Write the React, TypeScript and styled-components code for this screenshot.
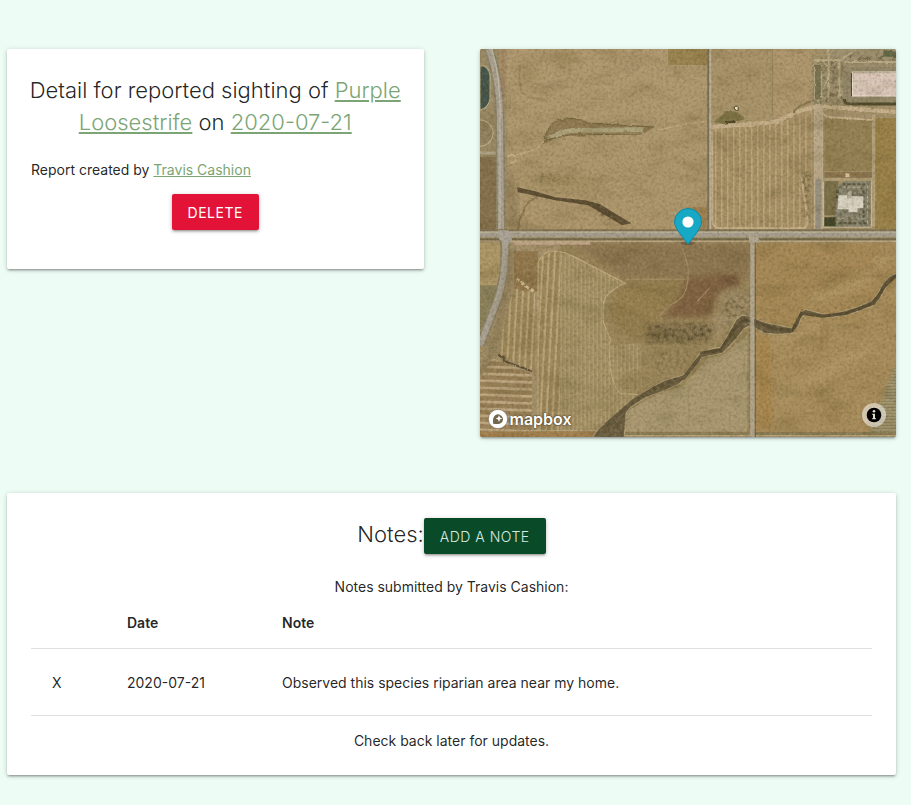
import React from 'react';
import styled, { createGlobalStyle, css } from 'styled-components';

const GlobalStyle = createGlobalStyle`
  *, *::before, *::after { box-sizing: border-box; }
  body {
    margin: 0;
    background: #edfdf6;
    color: rgba(0, 0, 0, 0.87);
    font-family: Inter, 'Open Sans', sans-serif;
    font-size: 14px;
    line-height: 21px;
  }
`;

const raised = css`
  box-shadow: 0 2px 2px 0 rgba(0, 0, 0, 0.14), 0 3px 1px -2px rgba(0, 0, 0, 0.12),
    0 1px 5px 0 rgba(0, 0, 0, 0.2);
`;

const Page = styled.main`
  display: grid;
  grid-template-columns: repeat(2, minmax(0, 1fr));
  gap: 56px;
  align-items: start;
  padding: 49px 15px 30px 7px;
`;

const Card = styled.section<{ $wide?: boolean }>`
  ${raised}
  background: #fff;
  border-radius: 2px;
  padding: ${(p) => (p.$wide ? '24px' : '25px 24px 39px')};
  grid-column: ${(p) => (p.$wide ? '1 / -1' : 'auto')};
`;

const Title = styled.h1`
  margin: 0 -8px 21px;
  font-size: 22px;
  font-weight: 300;
  line-height: 32px;
  text-align: center;
`;

const NotesHeader = styled.header`
  display: flex;
  justify-content: center;
  align-items: center;
  margin-bottom: 22px;
  padding-top: 1px;
`;

const NotesTitle = styled.h2`
  margin: 0;
  padding-bottom: 4px;
  font-size: 22px;
  font-weight: 300;
  line-height: 32px;
`;

const Link = styled.a`
  color: #7ba574;
  text-decoration: underline;
`;

const Text = styled.p<{ $center?: boolean }>`
  margin: 0;
  text-align: ${(p) => (p.$center ? 'center' : 'left')};
`;

const Actions = styled.div`
  display: flex;
  justify-content: center;
  margin-top: 14px;
`;

const Button = styled.button<{ $tone: 'danger' | 'primary' }>`
  ${raised}
  height: 36px;
  padding: 0 16px;
  border: 0;
  border-radius: 2px;
  background: ${(p) => (p.$tone === 'danger' ? '#e31337' : '#094a28')};
  color: ${(p) => (p.$tone === 'danger' ? '#fff' : '#dcebe2')};
  font: inherit;
  font-weight: ${(p) => (p.$tone === 'danger' ? 400 : 300)};
  letter-spacing: 0.5px;
  text-transform: uppercase;
  cursor: pointer;
`;

const MapFrame = styled.section`
  ${raised}
  position: relative;
  overflow: hidden;
  border-radius: 2px;
`;

const Terrain = styled.svg`
  display: block;
  width: 100%;
  height: auto;

  filter {
    color-interpolation-filters: sRGB;
  }
`;

const Marker = styled.svg`
  position: absolute;
  left: 50%;
  top: 50%;
  width: 28px;
  height: 38px;
  margin: -35px 0 0 -14px;
`;

const MapBrand = styled.a`
  position: absolute;
  left: 8px;
  bottom: 8px;
  display: flex;
  align-items: center;
  gap: 2px;
  color: #fff;
  font-size: 16px;
  font-weight: 600;
  line-height: 20px;
  text-decoration: none;
  text-shadow: 0 0 2px #4b412c, 0 0 2px #4b412c;
`;

const InfoButton = styled.button`
  position: absolute;
  right: 10px;
  bottom: 10px;
  display: grid;
  place-items: center;
  width: 24px;
  height: 24px;
  padding: 0;
  border: 0;
  border-radius: 12px;
  background: rgba(255, 255, 255, 0.5);
  cursor: pointer;
`;

const Table = styled.table`
  width: 100%;
  margin-bottom: 14px;
  border-collapse: collapse;
  table-layout: fixed;
`;

const Row = styled.tr`
  border-bottom: 1px solid rgba(0, 0, 0, 0.12);
`;

const HeadCell = styled.th<{ $width?: string }>`
  width: ${(p) => p.$width || 'auto'};
  padding: 15px 5px;
  font-weight: 600;
  text-align: left;
`;

const Cell = styled.td`
  padding: 15px 5px;
`;

const RemoveButton = styled.button`
  display: block;
  height: 36px;
  padding: 0 16px;
  border: 0;
  background: transparent;
  color: inherit;
  font: inherit;
  cursor: pointer;
`;

const RIVER =
  'M112 388L118 380 128 371 152 352 165 342 184 331 202 326 211 317 220 303 230 300 240 298 246 289 251 279 256 270 262 266 270 267 284 273 298 276 312 279 317 272 319 264 325 260 332 262 344 265 352 265 376 258 390 252 397 245 402 235 409 227 416 224 416 228 411 230 405 239 399 250 393 256 378 262 352 268 342 268 326 264 321 268 318 277 311 284 298 285 284 284 270 276 263 280 257 288 250 296 242 304 232 306 222 308 213 319 207 327 198 335 182 342 166 348 150 358 146 364 144 388Z';

const Satellite = () => (
  <Terrain viewBox="0 0 416 388" role="img" aria-label="Satellite view of the sighting location">
    <defs>
      <pattern id="rows" width="6" height="8" patternUnits="userSpaceOnUse">
        <rect width="6" height="8" fill="#a68f65" />
        <path d="M1.5 0V8" stroke="#bea880" strokeWidth="1.3" />
      </pattern>
      <pattern id="fineRows" width="4" height="8" patternUnits="userSpaceOnUse">
        <rect width="4" height="8" fill="#a08d62" />
        <path d="M1 0V8" stroke="#b3a077" strokeWidth="1" />
      </pattern>
      <pattern id="slantRows" width="6" height="8" patternUnits="userSpaceOnUse" patternTransform="rotate(3)">
        <rect width="6" height="8" fill="#9a855a" />
        <path d="M1.5 0V8" stroke="#bba678" strokeWidth="2" />
      </pattern>
      <pattern id="flatRows" width="8" height="7" patternUnits="userSpaceOnUse" patternTransform="rotate(2)">
        <rect width="8" height="7" fill="#987f57" />
        <path d="M0 2H8" stroke="#c0aa84" strokeWidth="2.6" />
      </pattern>
      <pattern id="hatch" width="3" height="3" patternUnits="userSpaceOnUse">
        <rect width="3" height="3" fill="#a3966e" />
        <path d="M0 1H3" stroke="#8a825f" strokeWidth="1" />
      </pattern>
      <linearGradient id="northField" x1="0" y1="0" x2="0" y2="1">
        <stop offset="0" stopColor="#b09971" />
        <stop offset="0.65" stopColor="#ac976e" />
        <stop offset="1" stopColor="#ad956c" />
      </linearGradient>
      <filter id="soft" x="-30%" y="-30%" width="160%" height="160%">
        <feGaussianBlur stdDeviation="5" />
      </filter>
      <filter id="blend" x="-10%" y="-10%" width="120%" height="120%">
        <feGaussianBlur stdDeviation="3" />
      </filter>
      <filter id="rough" x="-5%" y="-5%" width="110%" height="110%">
        <feTurbulence type="fractalNoise" baseFrequency="0.2" numOctaves="2" seed="4" result="n" />
        <feDisplacementMap in="SourceGraphic" in2="n" scale="3" xChannelSelector="R" yChannelSelector="G" />
      </filter>
      <filter id="grain" x="0" y="0" width="100%" height="100%">
        <feTurbulence type="fractalNoise" baseFrequency="0.35" numOctaves="4" seed="8" />
        <feColorMatrix values="0 0 0 0 0.25  0 0 0 0 0.2  0 0 0 0 0.1  1.6 0 0 0 -0.7" />
      </filter>
      <filter id="glint" x="0" y="0" width="100%" height="100%">
        <feTurbulence type="fractalNoise" baseFrequency="0.3" numOctaves="3" seed="31" />
        <feColorMatrix values="0 0 0 0 0.87  0 0 0 0 0.79  0 0 0 0 0.6  1.6 0 0 0 -0.7" />
      </filter>
      <filter id="mottle" x="0" y="0" width="100%" height="100%">
        <feTurbulence type="fractalNoise" baseFrequency="0.03 0.06" numOctaves="4" seed="21" />
        <feColorMatrix values="0 0 0 0 0.3  0 0 0 0 0.26  0 0 0 0 0.1  0 2 0 0 -0.95" />
      </filter>
      <filter id="scrub" x="-5%" y="-5%" width="110%" height="110%">
        <feTurbulence type="fractalNoise" baseFrequency="0.25" numOctaves="4" seed="12" />
        <feColorMatrix values="0 0 0 0 0.3  0 0 0 0 0.26  0 0 0 0 0.15  3 0 0 0 -1.3" result="t" />
        <feGaussianBlur in="SourceGraphic" stdDeviation="2" result="b" />
        <feComposite in="t" in2="b" operator="in" />
      </filter>
    </defs>

    <rect width="416" height="388" fill="#a3906a" />

    {/* fields north of the highway */}
    <rect x="27" width="201" height="182" fill="url(#northField)" />
    <rect width="19" height="181" fill="#9a8a66" />
    <rect y="108" width="16" height="73" fill="#86724f" />
    <rect x="188" width="40" height="16" fill="#99834f" />
    <path d="M40 16Q36 46 51 49L66 51" fill="none" stroke="#96825a" strokeWidth="2" opacity="0.7" filter="url(#rough)" />
    <g fill="#85703f" opacity="0.3" filter="url(#soft)">
      <ellipse cx="86" cy="7" rx="13" ry="8" />
      <ellipse cx="130" cy="5" rx="10" ry="7" />
      <ellipse cx="78" cy="132" rx="34" ry="7" />
      <ellipse cx="48" cy="24" rx="8" ry="14" />
      <ellipse cx="265" cy="24" rx="25" ry="10" />
    </g>
    <rect x="231" width="61" height="78" fill="#a8936a" />
    <rect x="293" width="39" height="69" fill="#ae966e" />
    <path d="M292 0V68" stroke="#958259" strokeWidth="1" />
    <path d="M231 80L272 77 300 73 331 64V181H231Z" fill="url(#rows)" />
    <path d="M232 83V172Q233 179 240 179H322Q328 178 327 169L321 128" fill="none" stroke="#c6b088" strokeWidth="2" />
    <rect x="344" y="69" width="48" height="53" fill="#948154" />
    <rect x="395" y="69" width="21" height="112" fill="#998049" />
    <rect x="344" y="123" width="48" height="6" fill="#8c7650" />
    <path d="M393 65V178M343 130H393" stroke="#b4a17b" strokeWidth="3" />
    <rect x="207" y="158" width="20" height="22" fill="#94713d" opacity="0.5" filter="url(#rough)" />

    {/* yards and service roads in the north-east */}
    <path d="M332 10H364V57H332Z" fill="#a09270" />
    <path d="M345 0H416V24H364L345 56Z" fill="#9e9070" />
    <path d="M332 10H364V57H332ZM366 4H416V14H366Z" filter="url(#scrub)" opacity="0.5" />
    <g fill="none" filter="url(#rough)">
      <rect x="334" y="15" width="7" height="36" fill="#7a7352" stroke="#b8ab88" strokeWidth="1" />
      <path d="M348 0V49M359 12V48M334 11H360L372 3" stroke="#b8aa84" strokeWidth="2" />
      <path d="M344 14Q353 22 345 35T348 51" stroke="#bfb28c" strokeWidth="1" />
      <path d="M364 13H416" stroke="#b9aa87" strokeWidth="2" />
      <path d="M403 4L416 6" stroke="#535c3d" strokeWidth="6" opacity="0.8" />
    </g>
    <path d="M370 18H416V56H366Q363 54 363 49V26Q363 20 370 18Z" fill="#928769" />
    <path d="M364 50Q364 55 369 55H416" fill="none" stroke="#504b2c" strokeWidth="3" />
    <rect x="372" y="24" width="44" height="23" fill="#dcc9bc" />
    <path d="M371 23H416M372 23V47H416" fill="none" stroke="#eee4d6" strokeWidth="1" />
    <path d="M371 24V47" stroke="#4c4637" strokeWidth="1" />
    <path d="M374 32H416" stroke="#c0b3a3" strokeDasharray="2 3" />
    <g fill="none" stroke="#c6b18c" filter="url(#rough)">
      <path d="M231 78L272 75 298 72 315 63 337 57 416 63" strokeWidth="4" />
      <path d="M337 60L347 68 394 71" strokeWidth="2" />
      <path d="M313 64Q319 54 334 52" strokeWidth="2" stroke="#84734c" />
    </g>
    <g filter="url(#rough)">
      <path d="M233 73L242 66 249 61 258 64 265 70 254 73 243 75Z" fill="#7c7246" />
      <path d="M244 73H255" stroke="#4c4727" strokeWidth="2" />
      <circle cx="256" cy="59" r="2" fill="#ede2c1" stroke="#574c30" />
    </g>
    <path d="M320 124L332 125 328 143 329 174H325L324 140Z" filter="url(#scrub)" />
    <path d="M338 56V182" stroke="#bba88a" strokeWidth="7" />
    <path d="M338 130V182" stroke="#979080" strokeWidth="6" />
    <path d="M334 60V180M342 60V180" stroke="#c3b292" strokeWidth="1" />
    <rect x="344" y="132" width="14" height="34" fill="#796f48" />
    <path d="M357 136L365 132H390V178H344V170L355 166Z" fill="#8b8772" />
    <g fill="none" strokeDasharray="3 2">
      <path d="M362 138H387M387 136V175M356 169H386" stroke="#b5ae96" strokeWidth="1" />
      <path d="M362 135H388M353 174H388M383 141V172" stroke="#55553f" strokeWidth="2" />
      <path d="M357 141V151" stroke="#4c5033" strokeWidth="3" />
    </g>
    <path d="M357 134H390V178H350V166Z" filter="url(#scrub)" opacity="0.5" />
    <path d="M358 146H367V149H368V147H383V159H377V163H368V160H357Z" fill="#dad4c5" />
    <path d="M368 142H371V149H367V145Z" fill="#b2ab98" />
    <path d="M343 131V178H391V131" fill="none" stroke="#cabc98" strokeWidth="1" />
    <rect x="344" y="168" width="11" height="9" fill="#424428" />
    <rect x="365" y="124" width="4" height="4" fill="#dfc6a2" />

    {/* gravel pit and creek */}
    <g filter="url(#rough)">
      <path d="M63 95Q66 78 76 72 94 66 108 74L174 78 164 84 90 86 76 89Z" fill="#907b53" />
      <path d="M67 90Q76 80 95 79L164 78 161 83 90 84 76 88Z" fill="#aca27b" />
      <path d="M63 95Q66 78 76 72 94 66 108 74L174 78M66 91L90 86 162 85" fill="none" stroke="#75653f" strokeWidth="1" />
      <path d="M178 81L206 75 228 72M31 107L54 101 64 93" fill="none" stroke="#c6b086" strokeWidth="1" />
      <path d="M57 148Q42 153 38 180" fill="none" stroke="#8e7a53" strokeWidth="2" />
      <path d="M27 106L36 107 36 112 29 115" fill="none" stroke="#d4bd91" strokeWidth="1" />
    </g>
    <path d="M28 112L37 139 38 180H26Z" fill="#84734f" opacity="0.6" filter="url(#blend)" />
    <path d="M37 138L55 142 75 148 105 151 120 155 136 165 151 174 142 176 127 167 108 156 75 151 53 146 38 143Z" fill="#5c4d33" />
    <path d="M112 156L128 164 140 175 122 166Z" filter="url(#scrub)" />
    <path d="M53 146H70V150H54ZM60 124H90V132H50Z" filter="url(#scrub)" opacity="0.5" />

    {/* west side: ponds and the county road */}
    <path d="M0 17H4Q10 20 10 28V50Q8 59 0 61Z" fill="#44544a" stroke="#bdb08a" strokeWidth="1" />
    <circle cx="0" cy="84" r="13" fill="#918360" stroke="#c6b68e" strokeWidth="1" />
    <path d="M0 104H18" stroke="#b0a588" strokeWidth="3" />
    <path d="M23 0V56" stroke="#a5805e" strokeWidth="3" opacity="0.8" />

    {/* fields south of the highway */}
    <rect y="194" width="24" height="42" fill="#ad9768" />
    <path d="M0 236H25L7 280 0 292Z" fill="#8a805b" />
    <rect x="34" y="202" width="24" height="40" fill="#91764c" />
    <path d="M80 194H270V382H110Z" fill="#9a865b" />
    <path d="M92 194H270V230H206L145 231Z" fill="#8c7551" filter="url(#blend)" />
    <path d="M148 231H205Q208 245 194 253L178 268 172 288 164 292 138 280 131 268 132 247Z" fill="#957e4f" filter="url(#blend)" />
    <path d="M206 228L254 224 262 234 240 246 232 268 180 269 196 253Z" fill="#7d6040" filter="url(#blend)" />
    <path d="M240 228L257 226V238L246 236Z" fill="#694e33" opacity="0.8" filter="url(#blend)" />
    <path d="M200 195Q212 219 206 239Q204 249 190 256L176 269M145 230H205M217 252L230 238" fill="none" stroke="#a98f66" strokeWidth="1" />
    <path d="M240 244L255 238 268 242V266L250 274 238 290 228 284Z" fill="#a4906b" filter="url(#blend)" />
    <path d="M244 246H268V264L252 270 242 282Z" filter="url(#scrub)" opacity="0.5" />
    <path d="M166 274H222L236 276 228 292 167 293Z" fill="#7c6a48" opacity="0.7" filter="url(#blend)" />
    <path d="M164 274H236L226 294H167Z" filter="url(#scrub)" opacity="0.7" />
    <path d="M170 300H218L200 318 176 326Z" filter="url(#scrub)" opacity="0.3" />
    <path d="M58 211Q65 202 75 202L86 203 145 233 126 246 123 269 130 296 160 294 162 336 144 362 114 382H58Z" fill="url(#fineRows)" />
    <path d="M58 211Q65 202 80 202V382H58Z" fill="url(#slantRows)" />
    <path d="M130 262Q136 290 162 294L166 270ZM142 324H162V342H142Z" fill="#8d7a4d" opacity="0.6" filter="url(#blend)" />
    <path d="M58 382V213Q64 200 76 202L87 204 145 234Q123 244 123 256V272L130 290Q127 330 140 344L158 345" fill="none" stroke="#c0ab80" strokeWidth="1" />
    <path d="M34 239L55 244V323L18 306 25 269Z" fill="url(#slantRows)" />
    <path d="M12 309L52 324V382H0V329Z" fill="url(#flatRows)" />
    <path d="M18 305L28 313 39 317 52 322" fill="none" stroke="#5e4f33" strokeWidth="2" filter="url(#rough)" />
    <path d="M52 322L80 334 123 343 149 349" fill="none" stroke="#7d6c45" strokeWidth="3" opacity="0.5" filter="url(#blend)" />
    <path d="M36 230L42 233 47 238 54 242" fill="none" stroke="#cbb78b" strokeWidth="3" strokeDasharray="4 2" filter="url(#rough)" />
    <path d="M144 382L148 361 182 342 202 337 228 309 246 304 267 285V382Z" fill="#a89770" />
    <path d="M208 337V382" stroke="#a08e66" strokeWidth="1" />
    <rect x="276" y="194" width="140" height="188" fill="#a58855" />
    <path d="M276 283L311 284 326 265 345 269 393 257 416 230V382H276Z" fill="#a88d5c" />
    <path d="M276 286L290 288 292 380H276Z" fill="#a78348" opacity="0.7" filter="url(#blend)" />
    <g stroke="#c3ab7e" fill="none" opacity="0.45" filter="url(#soft)">
      <path d="M416 195L380 235 325 253" strokeWidth="8" />
      <path d="M300 350L390 296" strokeWidth="7" />
      <path d="M290 296L314 284 344 270" strokeWidth="7" />
    </g>
    <path d="M324 236L328 252M342 270L346 287 334 308" fill="none" stroke="#8c744a" strokeWidth="4" opacity="0.45" filter="url(#blend)" />
    <path d="M416 313L404 343 388 388H416Z" fill="url(#hatch)" />
    <rect y="382" width="114" height="6" fill="#a17e4d" />
    <path d="M144 384H416" stroke="#8b7c55" strokeWidth="3" />
    <path d="M144 386H416M0 381H116" stroke="#b7a37c" strokeWidth="1" />

    <path d={RIVER} fill="#6e6044" stroke="#b5a27a" strokeWidth="1" />
    <path d="M220 304L240 301 253 281 262 272 270 271 295 280 312 281 321 264 342 267 366 264 393 254 404 237 416 226" fill="none" stroke="#5a4e34" strokeWidth="3" />
    <path d="M125 376L153 352 174 339 204 328 218 310" fill="none" stroke="#64583d" strokeWidth="4" />
    <path d={RIVER} filter="url(#scrub)" opacity="0.5" />

    <rect width="416" height="388" filter="url(#mottle)" opacity="0.25" />

    {/* roads */}
    <path d="M9 0Q20 32 20 70L21 182 25 194Q26 227 17 252L0 296" fill="none" stroke="#8a8168" strokeWidth="9" />
    <path d="M9 0Q20 32 20 70L21 182 25 194Q26 227 17 252L0 296" fill="none" stroke="#a8a192" strokeWidth="6" />
    <path d="M12 0Q21 32 20 70V182" fill="none" stroke="#c6bba6" strokeWidth="1" />
    <path d="M32 201Q31 236 20 266L14 300 0 324" fill="none" stroke="#7c6d49" strokeWidth="6" opacity="0.7" filter="url(#blend)" />
    <path d="M228 0V183" stroke="#776e55" strokeWidth="2" />
    <path d="M230 0V183" stroke="#bbae94" strokeWidth="2" />
    <path d="M275 190V388" stroke="#6a6340" strokeWidth="1" />
    <path d="M272 190V388" stroke="#b0a690" strokeWidth="4" />
    <path d="M269 195V382" stroke="#887a52" strokeWidth="1" strokeDasharray="4 2" />
    <path d="M0 181H416" stroke="#7f7252" strokeWidth="2" />
    <path d="M0 185H416" stroke="#a59e8e" strokeWidth="6" />
    <path d="M0 183H416" stroke="#beb49b" strokeWidth="1" />
    <path d="M0 190H416" stroke="#71684a" strokeWidth="2" />
    <path d="M30 192H416" stroke="#c2af8d" strokeWidth="1" />
    <path d="M34 194H110" stroke="#bfa488" strokeWidth="3" />
    <path d="M18 181H29L32 191 27 196 19 190Z" fill="#aaa398" />
    <path d="M268 185H277L280 193H269Z" fill="#b0a693" />

    <rect width="416" height="388" filter="url(#grain)" opacity="0.3" />
    <rect width="416" height="388" filter="url(#glint)" opacity="0.25" />
  </Terrain>
);

const MapMarker = () => (
  <Marker viewBox="0 0 28 38" aria-hidden="true">
    <ellipse cx="14" cy="35" rx="7" ry="2" fill="#000" opacity="0.2" />
    <path
      d="M27.5 14C27.5 20 20 28 15 35Q14 37 13 35C8 28 .5 20 .5 14A13.5 13.5 0 0 1 27.5 14Z"
      fill="#16a8c5"
      stroke="#1289a1"
      strokeWidth="1"
    />
    <circle cx="14" cy="14" r="5.6" fill="#fff" />
  </Marker>
);

const BrandMark = () => (
  <svg width="20" height="20" viewBox="0 0 20 20" aria-hidden="true">
    <circle cx="10" cy="10" r="9.6" fill="#fff" stroke="#6b5f43" strokeWidth="0.5" />
    <path d="M5.2 14.7C4.4 10.8 5.3 7.8 7.5 6A5 5 0 0 1 14 13.2C12.1 15 9 15.5 5.2 14.7Z" fill="#72664b" />
    <path d="M11 6.3L12 8.6 14.3 9.6 12 10.6 11 12.9 10 10.6 7.7 9.6 10 8.6Z" fill="#fff" />
  </svg>
);

const InfoIcon = () => (
  <svg width="16" height="16" viewBox="0 0 16 16" aria-hidden="true">
    <circle cx="8" cy="8" r="7.3" fill="#000" />
    <circle cx="8" cy="4.2" r="1.3" fill="#e2dac9" />
    <path d="M6.3 6.8H9V11H9.8V12.3H6.3V11H7V8H6.3Z" fill="#e2dac9" />
  </svg>
);

export default function App() {
  return (
    <>
      <GlobalStyle />
      <Page>
        <Card>
          <Title>
            Detail for reported sighting of <Link href="#species">Purple Loosestrife</Link> on{' '}
            <Link href="#date">2020-07-21</Link>
          </Title>
          <Text>
            Report created by <Link href="#user">Travis Cashion</Link>
          </Text>
          <Actions>
            <Button type="button" $tone="danger">Delete</Button>
          </Actions>
        </Card>

        <MapFrame aria-label="Sighting map">
          <Satellite />
          <MapMarker />
          <MapBrand href="#mapbox">
            <BrandMark />
            mapbox
          </MapBrand>
          <InfoButton type="button" aria-label="Toggle attribution">
            <InfoIcon />
          </InfoButton>
        </MapFrame>

        <Card $wide>
          <NotesHeader>
            <NotesTitle>Notes:</NotesTitle>
            <Button type="button" $tone="primary">Add a note</Button>
          </NotesHeader>
          <Text $center>Notes submitted by Travis Cashion:</Text>
          <Table>
            <thead>
              <Row>
                <HeadCell $width="91px" aria-label="Remove" />
                <HeadCell $width="155px" scope="col">Date</HeadCell>
                <HeadCell scope="col">Note</HeadCell>
              </Row>
            </thead>
            <tbody>
              <Row>
                <Cell>
                  <RemoveButton type="button">X</RemoveButton>
                </Cell>
                <Cell>2020-07-21</Cell>
                <Cell>Observed this species riparian area near my home.</Cell>
              </Row>
            </tbody>
          </Table>
          <Text $center>Check back later for updates.</Text>
        </Card>
      </Page>
    </>
  );
}
